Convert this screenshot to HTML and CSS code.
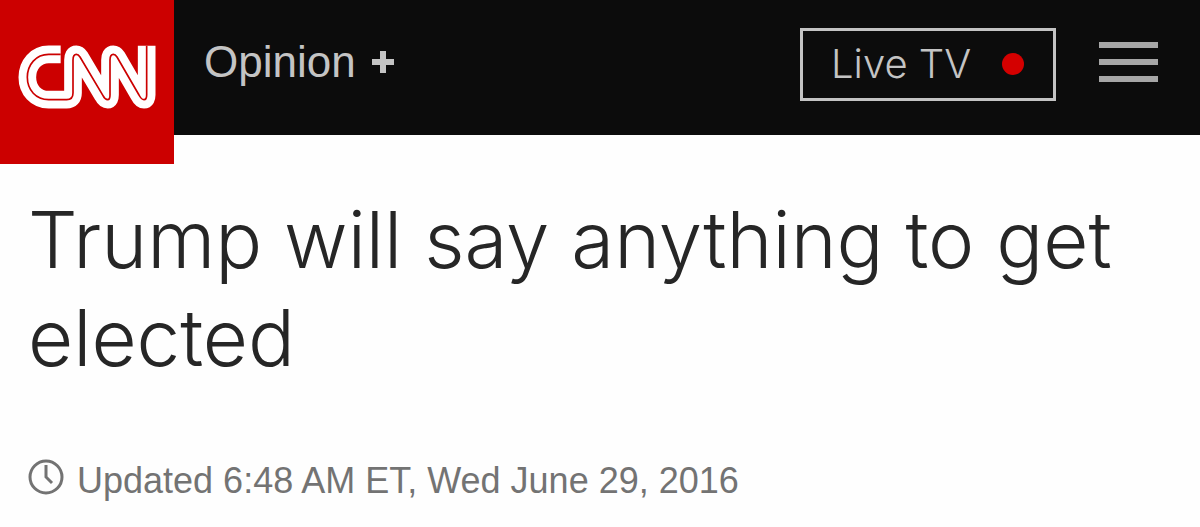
FILE: index.html
```html
<!DOCTYPE html>
<html lang="en">
<head>
<meta charset="utf-8">
<meta name="viewport" content="width=device-width, initial-scale=1">
<title>Trump will say anything to get elected</title>
<link rel="stylesheet" href="styles.css">
</head>
<body>
<header class="site-header">
  <a class="logo" href="#" aria-label="CNN">
    <svg class="logo-mark" viewBox="0 0 522 492" fill="none" aria-hidden="true">
      <path class="logo-body" d="M182 163H146C108 163 82 194 82 232C82 270 108 299 146 299H200Q219 299 219 279V180Q219 163 229 163Q235 163 240 171L309 287Q315 299 323 299Q330 299 330 285V180Q330 163 340 163Q346 163 351 171L417 285Q424 299 432 299Q440 299 440 285V137"/>
      <path class="logo-line" d="M182 163H146C108 163 82 194 82 232C82 270 108 299 146 299H200Q219 299 219 279V180Q219 163 229 163Q235 163 240 171L309 287Q315 299 323 299Q330 299 330 285V180Q330 163 340 163Q346 163 351 171L417 285Q424 299 432 299Q440 299 440 285V137"/>
    </svg>
  </a>
  <nav class="section-nav">
    <a class="section-link" href="#">Opinion</a>
    <button class="expand" type="button" aria-label="Expand sections">
      <svg class="plus" viewBox="0 0 22 22" aria-hidden="true"><path d="M8 0h6v8h8v6h-8v8H8v-8H0V8h8z"/></svg>
    </button>
  </nav>
  <a class="live" href="#">Live TV<span class="live-dot"></span></a>
  <button class="menu" type="button" aria-label="Menu">
    <span class="menu-bar"></span>
    <span class="menu-bar"></span>
    <span class="menu-bar"></span>
  </button>
</header>
<main class="article">
  <h1 class="headline">Trump will say anything to get elected</h1>
  <p class="updated">
    <svg class="clock" viewBox="0 0 36 36" fill="none" aria-hidden="true"><circle cx="18" cy="18" r="16"/><path d="M18 6v12l6 6"/></svg>
    <span>Updated 6:48 AM ET, Wed June 29, 2016</span>
  </p>
</main>
</body>
</html>
```
FILE: styles.css
```css
* {
  box-sizing: border-box;
}

body {
  margin: 0;
  background: #fefefe;
  color: #262626;
  font-family: "Liberation Sans", Arial, sans-serif;
}

button {
  margin: 0;
  padding: 0;
  border: 0;
  background: none;
}

.site-header {
  display: flex;
  align-items: flex-start;
  height: 135px;
  background: #0c0c0c;
}

.logo {
  display: block;
  flex: none;
  width: 174px;
  height: 164px;
  background: #cc0000;
}

.logo-mark {
  display: block;
  width: 100%;
  height: 100%;
}

.logo-body {
  stroke: #fff;
  stroke-width: 53;
  stroke-linejoin: round;
}

.logo-line {
  stroke: #cc0000;
  stroke-width: 5;
}

.section-nav {
  display: flex;
  align-items: center;
  gap: 16px;
  margin: 36px auto 0 30px;
}

.section-link {
  color: #c4c4c4;
  font-size: 44px;
  line-height: 52px;
  text-decoration: none;
}

.plus {
  display: block;
  width: 22px;
  height: 22px;
  fill: #c4c4c4;
}

.live {
  display: flex;
  align-items: center;
  justify-content: space-between;
  width: 256px;
  height: 73px;
  margin-top: 28px;
  padding: 0 29px 2px 28px;
  border: 3px solid #c4c4c4;
  color: #c4c4c4;
  font-family: Inter, sans-serif;
  font-size: 40px;
  font-weight: 300;
  text-decoration: none;
}

.live-dot {
  width: 22px;
  height: 22px;
  border-radius: 50%;
  background: #d40000;
}

.menu {
  display: flex;
  flex-direction: column;
  gap: 11px;
  margin: 42px 42px 0 43px;
}

.menu-bar {
  width: 59px;
  height: 6px;
  background: #a6a6a6;
}

.article {
  padding: 56px 28px 24px;
}

.headline {
  margin: 0;
  font-family: Inter, sans-serif;
  font-size: 78px;
  font-weight: 350;
  line-height: 98px;
}

.updated {
  display: flex;
  align-items: flex-start;
  gap: 13px;
  margin: 72px 0 0;
  color: #737373;
  font-size: 36px;
  line-height: 44px;
}

.clock {
  flex: none;
  width: 36px;
  height: 36px;
  stroke: #737373;
  stroke-width: 3;
}
```
